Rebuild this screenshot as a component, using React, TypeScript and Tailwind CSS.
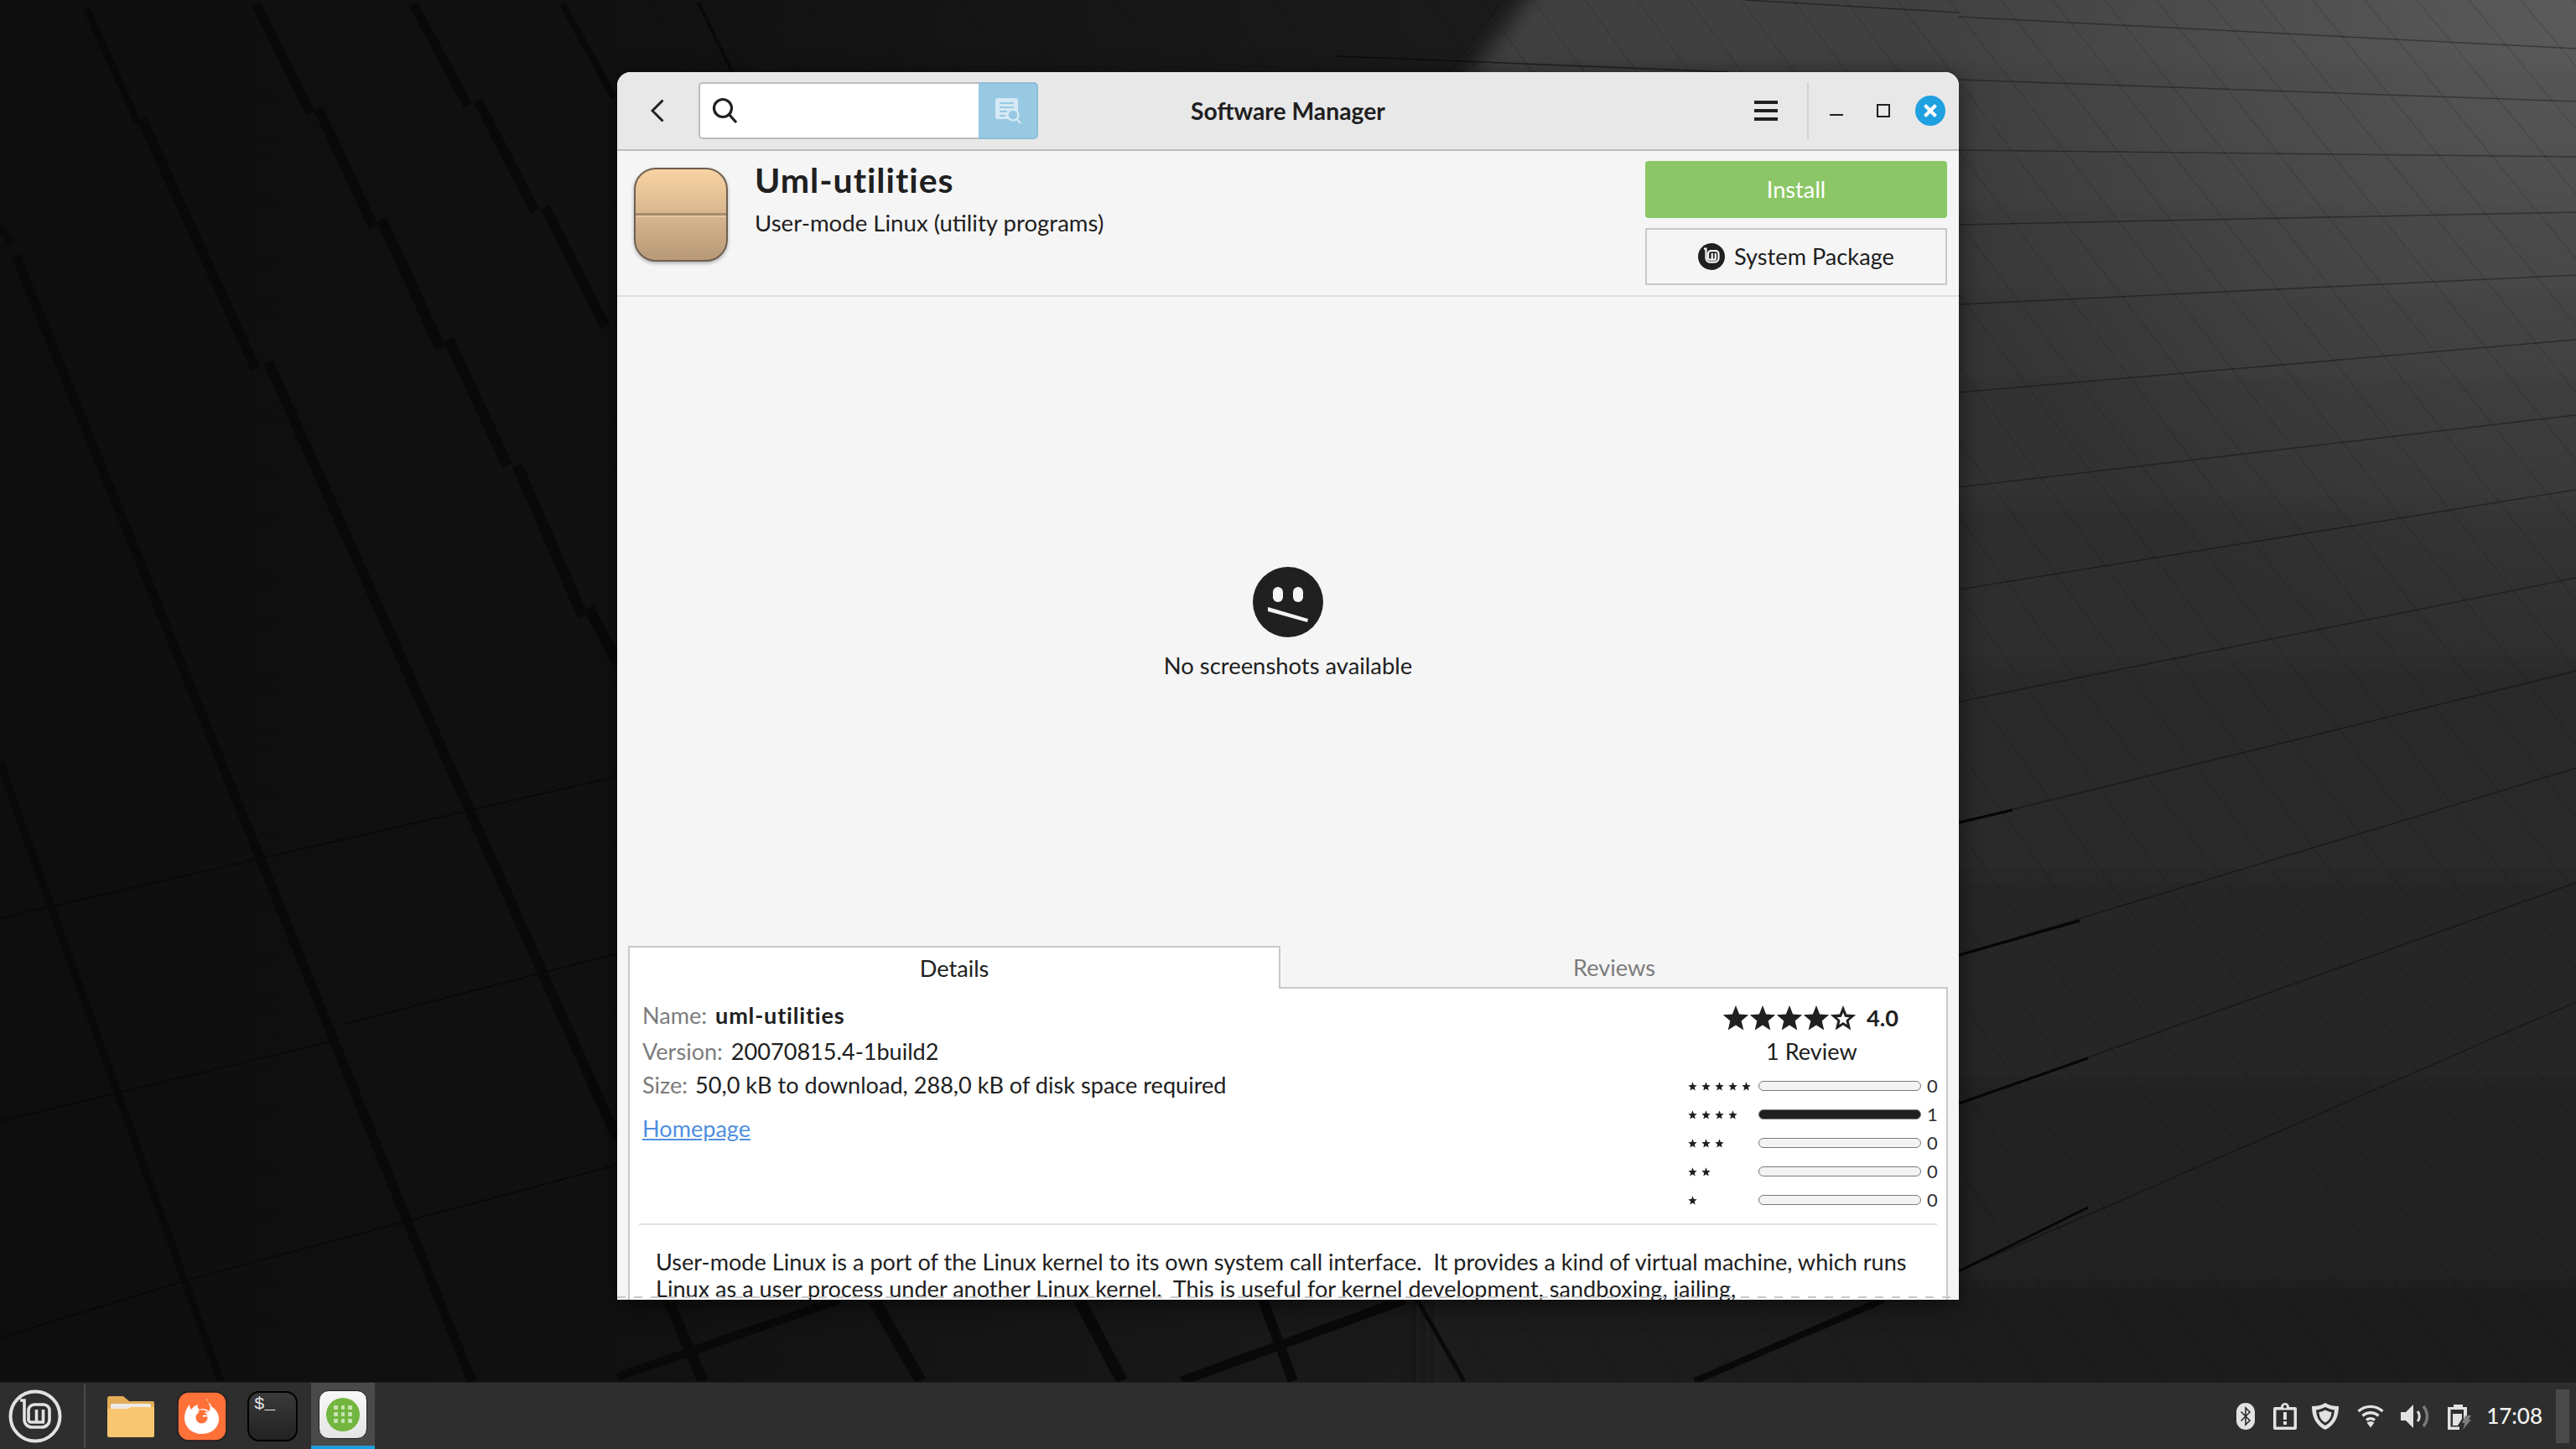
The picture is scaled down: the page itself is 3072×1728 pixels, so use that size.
import React from 'react';

const DARK_SEGMENTS = [
  [0, 910, 263, 1647, 9], [19, 305, 563, 1647, 11], [0, 272, 14, 290, 8],
  [103, 10, 165, 147, 9], [169, 142, 305, 440, 12], [320, 432, 736, 1358, 12],
  [305, 5, 370, 135, 11], [380, 130, 445, 270, 12], [455, 262, 525, 415, 13], [535, 405, 605, 555, 13], [617, 555, 695, 735, 13], [702, 725, 736, 790, 13],
  [493, 5, 558, 126, 11], [570, 120, 638, 252, 12], [650, 247, 722, 390, 12],
  [671, 5, 732, 116, 8],
  [797, 1550, 838, 1647, 13], [1042, 1550, 1098, 1647, 14], [1287, 1550, 1338, 1647, 14], [1506, 1550, 1542, 1647, 12], [1690, 1550, 1746, 1647, 5],
  [1001, 1550, 736, 1642, 10], [1675, 1550, 1409, 1647, 11], [2246, 1550, 2021, 1647, 8],
  [833, 3, 873, 86, 4],
];

const THIN_LEFT = [
  [0, 1095, 736, 926], [0, 1337, 395, 1242], [408, 1222, 736, 1137], [225, 1526, 736, 1389], [0, 1595, 225, 1526],
];

const WALL_LINES = [
  [20, 58], [95, 121], [179, 187], [268, 253], [363, 328], [468, 405], [581, 495], [703, 584], [837, 689], [981, 800], [1139, 916], [1316, 1053], [1516, 1195],
];

function Wallpaper() {
  return (
    <svg className="absolute inset-0" width="3072" height="1648" viewBox="0 0 3072 1648">
      <defs>
        <linearGradient id="base" x1="0" y1="0" x2="1" y2="0">
          <stop offset="0" stopColor="#0e0e0e" />
          <stop offset="0.24" stopColor="#111111" />
          <stop offset="0.55" stopColor="#1a1a1a" />
          <stop offset="1" stopColor="#1e1e1e" />
        </linearGradient>
        <linearGradient id="wall" x1="0" y1="0" x2="0" y2="1">
          <stop offset="0" stopColor="#424242" />
          <stop offset="0.35" stopColor="#303030" />
          <stop offset="0.75" stopColor="#252525" />
          <stop offset="1" stopColor="#1c1c1c" />
        </linearGradient>
        <radialGradient id="glow" cx="3072" cy="0" r="800" gradientUnits="userSpaceOnUse">
          <stop offset="0" stopColor="#ffffff" stopOpacity="0.14" />
          <stop offset="1" stopColor="#ffffff" stopOpacity="0" />
        </radialGradient>
        <filter id="soft"><feGaussianBlur stdDeviation="12" /></filter>
      </defs>
      <rect width="3072" height="1648" fill="url(#base)" />
      <polygon points="1850,-40 3120,-40 3120,1700 1700,1700 1700,160" fill="url(#wall)" filter="url(#soft)" />
      <rect width="3072" height="1648" fill="url(#glow)" />
      {DARK_SEGMENTS.map(([x1, y1, x2, y2, w], i) => (
        <line key={i} x1={x1} y1={y1} x2={x2} y2={y2} stroke="#090909" strokeWidth={w} />
      ))}
      {THIN_LEFT.map(([x1, y1, x2, y2], i) => (
        <line key={i} x1={x1} y1={y1} x2={x2} y2={y2} stroke="#080808" strokeWidth="1.5" />
      ))}
      {WALL_LINES.map(([a, b], i) => (
        <line key={i} x1="2336" y1={a} x2="3072" y2={b} stroke="#000000" strokeOpacity="0.35" strokeWidth="1.5" />
      ))}
      {Array.from({ length: 40 }, (_, i) => i - 18).map(i => (
        <line key={i} x1={1890 + 62 * i} y1="0" x2={3084 + 72 * i} y2="1648" stroke="#000000" strokeOpacity="0.14" strokeWidth="1.2" />
      ))}
      <line x1="2082" y1="0" x2="2336" y2="15" stroke="#000000" strokeOpacity="0.4" strokeWidth="1.5" />
      <line x1="1593" y1="67" x2="2062" y2="86" stroke="#000000" strokeOpacity="0.5" strokeWidth="1.5" />
      <line x1="2336" y1="981" x2="2400" y2="966" stroke="#060606" strokeWidth="3" />
      <line x1="2336" y1="1139" x2="2480" y2="1098" stroke="#060606" strokeWidth="3" />
      <line x1="2336" y1="1316" x2="2490" y2="1262" stroke="#060606" strokeWidth="3" />
      <line x1="2336" y1="1516" x2="2490" y2="1440" stroke="#060606" strokeWidth="3" />
    </svg>
  );
}

function Star({ size, filled = true }: { size: number; filled?: boolean }) {
  const outer = '12,0.8 15.1,8.6 23.4,9.2 17,14.6 19,22.8 12,18.3 5,22.8 7,14.6 0.6,9.2 8.9,8.6';
  return (
    <svg width={size} height={size} viewBox="0 0 24 24" className="shrink-0">
      <polygon points={outer} fill="#202020" />
      {!filled && <polygon points="12,7.2 13.6,11 17.6,11.4 14.6,14 15.5,18 12,15.8 8.5,18 9.4,14 6.4,11.4 10.4,11" fill="#ffffff" />}
    </svg>
  );
}

function HistogramRow({ stars, count }: { stars: number; count: number }) {
  return (
    <div className="flex h-[34px] items-center">
      <div className="flex w-[84px] gap-[5px]">
        {Array.from({ length: stars }, (_, i) => <Star key={i} size={11} />)}
      </div>
      <div className={`h-[12px] w-[194px] rounded-[6px] border border-[#7a7a7a] ${count ? 'bg-[#202020]' : 'bg-[#f3f3f3]'}`} />
      <span className="ml-[7px] w-[10px] text-[22px] leading-none text-[#303030]">{count}</span>
    </div>
  );
}

function MintLogo({ size, color, disc }: { size: number; color: string; disc?: boolean }) {
  return (
    <svg width={size} height={size} viewBox="0 0 64 64" fill="none" stroke={color}>
      {disc ? <circle cx="32" cy="32" r="32" fill="#202020" stroke="none" /> : <circle cx="32" cy="32" r="29.500" strokeWidth="4" />}
      <path d="M14 13 H19 V36 a9 9 0 0 0 9 9 H40 a9 9 0 0 0 9 -9 V25 a7 7 0 0 0 -7 -7 H31 a7 7 0 0 0 -7 7 V37" strokeWidth={disc ? 4.5 : 3.6} />
      <path d="M33.500 24 V39 M41.500 24 V39 M24 36 a3 3 0 0 0 3 3 H43" strokeWidth={disc ? 4.5 : 3.6} />
    </svg>
  );
}

function FirefoxIcon() {
  return (
    <svg width="60" height="60" viewBox="0 0 60 60">
      <rect x="1" y="1" width="58" height="58" rx="13" fill="#ff7139" stroke="#1d1d1d" strokeWidth="1.500" />
      <path d="M35 8 C35 13 41 14 41 18 C39 16 38 16 37 16 C44 19 50 25 50 33 C50 44 41 51 30 51 C18 51 9 43 9 32 C9 26 11 21 15 16 C15 19 16 21 17 22 C19 19 22 17 25 16 C24 18 25 21 27 22 C30 20 35 21 38 24 C42 20 37 12 35 8 Z" fill="#ffffff" />
      <circle cx="29.500" cy="31.500" r="7" fill="#ff7139" />
      <path d="M25 24 C28 21 34 22 38 26 C34 24 31 25 29 27 Z" fill="#ff7139" />
      <path d="M31 29 C34 28 36 29 37 31 C35 30 33 30 31 31 Z" fill="#ffffff" />
    </svg>
  );
}

function FolderIcon() {
  return (
    <svg width="56" height="50" viewBox="0 0 56 50">
      <path d="M0 4 a3 3 0 0 1 3 -3 H19 L26 7 H54 a2 2 0 0 1 2 2 V25 H0 Z" fill="#e3ad57" />
      <rect x="4" y="10" width="48" height="12" rx="2" fill="#ecebe7" />
      <path d="M0 17 a1 1 0 0 1 1 -1 H25 L28 14 H55 a1 1 0 0 1 1 1 V48 a2 2 0 0 1 -2 2 H2 a2 2 0 0 1 -2 -2 Z" fill="#f8c671" />
    </svg>
  );
}

function AppIcon() {
  const dots = [0, 1, 2, 3, 4, 5, 6, 7, 8];
  return (
    <div className="flex h-[58px] w-[58px] items-center justify-center rounded-[12px] border border-[#222222] bg-gradient-to-b from-[#f8f8f8] to-[#e4e4e4]">
      <div className="grid h-[40px] w-[40px] grid-cols-3 content-center justify-items-center gap-y-[3.5px] rounded-full bg-[#72b63f] px-[7px]">
        {dots.map(d => <span key={d} className="h-[4.5px] w-[4.5px] rounded-[1px] bg-[#c7e3b2]" />)}
      </div>
    </div>
  );
}

function TrayIcons() {
  const fg = '#e2e2e2';
  return (
    <div className="flex items-center">
      <svg width="22" height="32" viewBox="0 0 22 32">
        <rect width="22" height="32" rx="11" fill={fg} />
        <path d="M5.500 10.500 L16 21 L11 26 V6 L16 11 L5.500 21.500" fill="none" stroke="#2e2e2e" strokeWidth="1.600" />
      </svg>
      <svg width="28" height="32" viewBox="0 0 28 32" className="ml-[22px]">
        <path d="M2 5 H9 a5 5 0 0 1 10 0 H26 a2 2 0 0 1 2 2 V30 a2 2 0 0 1 -2 2 H2 a2 2 0 0 1 -2 -2 V7 a2 2 0 0 1 2 -2 Z" fill={fg} />
        <rect x="3.500" y="8.500" width="21" height="20" fill="#2e2e2e" />
        <circle cx="14" cy="4.500" r="2" fill="#2e2e2e" />
        <rect x="12" y="11" width="4" height="9" fill={fg} />
        <rect x="12" y="22" width="4" height="4" fill={fg} />
      </svg>
      <svg width="32" height="32" viewBox="0 0 32 32" className="ml-[18px]">
        <path d="M16 0 C21 3 26 4 32 4 C32 17 27 27 16 32 C5 27 0 17 0 4 C6 4 11 3 16 0 Z" fill={fg} />
        <path d="M16 5 C20 7 23 8 27 8.500 C26.500 17 23 23.500 16 27 C9 23.500 5.500 17 5 8.500 C9 8 12 7 16 5 Z" fill="#2e2e2e" />
        <path d="M16 8.500 C19 10 21 10.800 23.500 11 C23 17 21 21 16 23.500 C11 21 9 17 8.500 11 C11 10.800 13 10 16 8.500 Z" fill={fg} />
      </svg>
      <svg width="32" height="28" viewBox="0 0 32 28" fill="none" stroke={fg} strokeWidth="3.400" className="ml-[22px]">
        <path d="M1.500 8 C10 0.500 22 0.500 30.500 8" />
        <path d="M6.500 13.500 C12 8.500 20 8.500 25.500 13.500" />
        <path d="M11 18.500 C14 16 18 16 21 18.500" />
        <path d="M11.500 21.500 L16 27.500 L20.500 21.500 C17.500 19.500 14.500 19.500 11.500 21.500 Z" fill={fg} stroke="none" />
      </svg>
      <svg width="33" height="30" viewBox="0 0 33 30" className="ml-[20px]">
        <path d="M0 10 H6 L15 1 V29 L6 20 H0 Z" fill={fg} />
        <path d="M20 9 C23 12 23 18 20 21" fill="none" stroke={fg} strokeWidth="3" />
        <path d="M27 3 C33 10 33 20 27 27" fill="none" stroke="#7a7a7a" strokeWidth="3.500" />
      </svg>
      <svg width="28" height="32" viewBox="0 0 28 32" className="ml-[23px]">
        <path d="M7 2 H18 V5 H23 V18 L19 22 V8 H3.500 V28.500 H14 V32 H0 V5 H7 Z" fill={fg} />
        <path d="M6 13 H17 V19 L12 27 H6 Z" fill={fg} />
        <path d="M21 15 H28 L25 20 H28 L18 32 L20.500 24 H17 Z" fill="#7d7d7d" />
      </svg>
    </div>
  );
}

export default function App() {
  return (
    <div className="relative flex h-[1728px] w-[3072px] flex-col overflow-hidden bg-[#111111] font-[Lato,sans-serif] text-[#202020]">
      <div className="relative flex-1">
        <Wallpaper />
        <div className="absolute left-[736px] top-[86px] flex h-[1464px] w-[1600px] flex-col overflow-hidden rounded-t-[16px] bg-[#f5f5f5] shadow-[0_6px_28px_rgba(0,0,0,0.55)]">
          {/* header */}
          <div className="grid h-[94px] shrink-0 grid-cols-[1fr_auto_1fr] items-center border-b-2 border-[#bdbdbd] bg-[#e8e8e8]">
            <div className="flex items-center pl-[40px]">
              <svg width="16" height="28" viewBox="0 0 16 28" fill="none" stroke="#202020" strokeWidth="3">
                <path d="M14.500 1.500 L2 14 L14.500 26.500" />
              </svg>
              <div className="ml-[41px] flex h-[68px] w-[405px]">
                <div className="flex flex-1 items-center rounded-l-[5px] border-2 border-r-0 border-[#bcbcbc] bg-white pl-[14px]">
                  <svg width="32" height="32" viewBox="0 0 32 32" fill="none" stroke="#202020" strokeWidth="3.200">
                    <circle cx="13" cy="13" r="10.500" />
                    <path d="M20.500 20.500 L29 30" />
                  </svg>
                </div>
                <div className="flex w-[71px] items-center justify-center rounded-r-[5px] border-2 border-l-0 border-[#8fbdd6] bg-[#97c9e3]">
                  <svg width="32" height="32" viewBox="0 0 32 32">
                    <rect x="1" y="1" width="27" height="25" rx="3" fill="#d5e9f4" />
                    <path d="M6 7 H23 M6 12 H23 M6 17 H15 M6 22 H13" stroke="#97c9e3" strokeWidth="2" />
                    <circle cx="22" cy="21" r="6.500" fill="#97c9e3" stroke="#d5e9f4" strokeWidth="2.400" />
                    <path d="M26.500 25.500 L31 31" stroke="#d5e9f4" strokeWidth="2.600" />
                  </svg>
                </div>
              </div>
            </div>
            <div className="text-[28.300px] font-bold">Software Manager</div>
            <div className="flex items-center justify-end pr-[16px]">
              <div className="flex w-[28px] flex-col gap-[6px]">
                <span className="h-[4px] bg-[#202020]" />
                <span className="h-[4px] bg-[#202020]" />
                <span className="h-[4px] bg-[#202020]" />
              </div>
              <span className="ml-[35px] h-[68px] w-[2px] bg-[#d2d2d2]" />
              <span className="ml-[25px] mt-[10px] h-[2px] w-[16px] bg-[#202020]" />
              <span className="ml-[40px] h-[16px] w-[16px] border-2 border-[#202020]" />
              <div className="ml-[30px] flex h-[36px] w-[36px] items-center justify-center rounded-full bg-[#1fa0e0]">
                <svg width="16" height="16" viewBox="0 0 16 16" stroke="#ffffff" strokeWidth="4">
                  <path d="M1.500 1.500 L14.500 14.500 M14.500 1.500 L1.500 14.500" />
                </svg>
              </div>
            </div>
          </div>

          {/* package summary */}
          <div className="flex h-[174px] shrink-0 items-start justify-between border-b-2 border-[#dedede] pr-[14px]">
            <div className="flex pl-[20px] pt-[20px]">
              <div className="relative h-[112px] w-[112px] rounded-[26px] border-2 border-[#6e5f50] bg-gradient-to-b from-[#f8d3a3] to-[#b79a78] shadow-[0_2px_4px_rgba(0,0,0,0.3)]">
                <div className="absolute inset-x-0 top-[52px] h-[3px] bg-[#a78b6d]" />
                <div className="absolute inset-x-0 top-[55px] h-[2px] bg-[#e4c8a6]" />
              </div>
              <div className="ml-[32px]">
                <div className="mt-[-15px] text-[41px] font-bold leading-[60px] tracking-[1px]">Uml-utilities</div>
                <div className="mt-[3px] text-[27.600px] leading-[36px]">User-mode Linux (utility programs)</div>
              </div>
            </div>
            <div className="flex w-[360px] flex-col gap-[12px] pt-[12px]">
              <div className="flex h-[68px] items-center justify-center rounded-[4px] bg-[#8bc766] text-[27.200px] text-white">Install</div>
              <div className="flex h-[68px] items-center justify-center border-2 border-[#c8c8c8] text-[27.200px]">
                <MintLogo size={32} color="#f5f5f5" disc />
                <span className="ml-[11px]">System Package</span>
              </div>
            </div>
          </div>

          {/* screenshots placeholder */}
          <div className="flex flex-1 flex-col items-center pt-[322px]">
            <svg width="84" height="84" viewBox="0 0 84 84">
              <circle cx="42" cy="42" r="42" fill="#202020" />
              <rect x="24" y="24" width="12" height="18" rx="6" fill="#f5f5f5" />
              <rect x="48" y="24" width="12" height="18" rx="6" fill="#f5f5f5" />
              <polygon points="18,48 66,62 65,66 18,53" fill="#f5f5f5" />
            </svg>
            <div className="mt-[16px] text-[27.400px] leading-[36px]">No screenshots available</div>
          </div>

          {/* tabs */}
          <div className="flex h-[51px] shrink-0 px-[13px] text-[27.200px]">
            <div className="flex w-[778px] items-center justify-center border-2 border-b-0 border-[#c8c8c8] bg-white pt-[2px]">Details</div>
            <div className="flex flex-1 items-center justify-center border-b-2 border-[#c8c8c8] pt-[4px] text-[#7c7c7c]">Reviews</div>
          </div>

          {/* details panel */}
          <div className="mx-[13px] h-[371px] shrink-0 overflow-hidden border-x-2 border-[#c8c8c8] bg-white text-[27.100px]">
            <div className="flex h-[280px] justify-between pr-[13px]">
              <div className="pl-[15px] pt-[12px] leading-[40px]">
                <div><span className="text-[#7c7c7c]">Name:</span> <span className="ml-[3px] font-bold tracking-[0.8px]">uml-utilities</span></div>
                <div className="mt-[3px]"><span className="text-[#7c7c7c]">Version:</span> <span className="ml-[3px]">20070815.4-1build2</span></div>
                <div><span className="text-[#7c7c7c]">Size:</span> <span className="ml-[2px]">50,0 kB to download, 288,0 kB of disk space required</span></div>
                <div className="mt-[12px] text-[#4f8fe0] underline">Homepage</div>
              </div>
              <div className="w-[295px]">
                <div className="flex items-center pl-[41px] pt-[19px]">
                  <div className="flex">
                    <Star size={32} /><Star size={32} /><Star size={32} /><Star size={32} /><Star size={32} filled={false} />
                  </div>
                  <span className="ml-[12px] font-bold leading-[32px]">4.0</span>
                </div>
                <div className="mt-[4px] pl-[93px] leading-[40px]">1 Review</div>
                <div className="mt-[4px]">
                  <HistogramRow stars={5} count={0} />
                  <HistogramRow stars={4} count={1} />
                  <HistogramRow stars={3} count={0} />
                  <HistogramRow stars={2} count={0} />
                  <HistogramRow stars={1} count={0} />
                </div>
              </div>
            </div>
            <div className="mx-[11px] h-[2px] bg-[#e2e2e2]" />
            <div className="whitespace-pre pl-[31px] pt-[28px] leading-[32px]">
              <div>User-mode Linux is a port of the Linux kernel to its own system call interface.  It provides a kind of virtual machine, which runs</div>
              <div>Linux as a user process under another Linux kernel.  This is useful for kernel development, sandboxing, jailing,</div>
            </div>
          </div>

          {/* overshoot indicator */}
          <div className="absolute inset-x-0 bottom-[2px] h-[2px] bg-[repeating-linear-gradient(90deg,#c8c8c8_0,#c8c8c8_10px,transparent_10px,transparent_20px)]" />
        </div>
      </div>

      {/* panel */}
      <div className="flex h-[81px] shrink-0 items-center border-t-2 border-[#1f1f1f] bg-[#2e2e2e] text-white">
        <div className="ml-[10px] flex w-[64px] justify-center">
          <MintLogo size={64} color="#e2e2e2" />
        </div>
        <span className="ml-[26px] h-[76px] w-[2px] bg-[#4c4c4c]" />
        <div className="ml-[26px]"><FolderIcon /></div>
        <div className="ml-[27px]"><FirefoxIcon /></div>
        <div className="ml-[24px] h-[60px] w-[60px] rounded-[14px] border-2 border-black bg-gradient-to-b from-[#3a3a3a] to-[#222222] pl-[6px] pt-[2px] font-[Liberation_Mono,monospace] text-[21px] leading-[24px] text-[#e8e8e8]">$_</div>
        <div className="ml-[16px] flex h-[79px] w-[76px] items-center justify-center border-b-4 border-[#1f9ede] bg-[#4a4a4a]">
          <AppIcon />
        </div>
        <div className="flex flex-1 items-center justify-end">
          <TrayIcons />
          <span className="ml-[18px] text-[26px] font-medium text-[#f2f2f2]">17:08</span>
          <span className="ml-[16px] mr-[8px] h-[64px] w-[16px] bg-[#4a4a4a]" />
        </div>
      </div>
    </div>
  );
}
